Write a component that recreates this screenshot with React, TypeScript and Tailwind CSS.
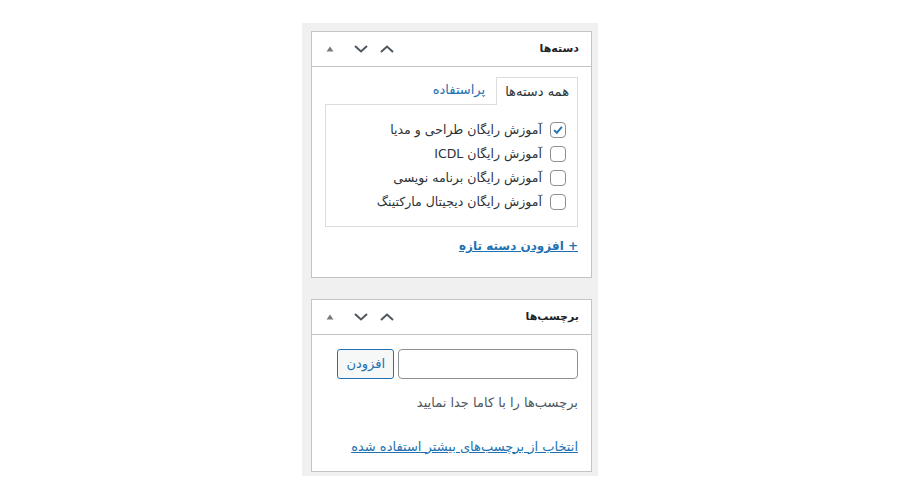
import React from 'react';

const categories = [
  { label: 'آموزش رایگان طراحی و مدیا', checked: true },
  { label: 'آموزش رایگان ICDL', checked: false },
  { label: 'آموزش رایگان برنامه نویسی', checked: false },
  { label: 'آموزش رایگان دیجیتال مارکتینگ', checked: false },
];

const font = { fontFamily: 'Tahoma, "DejaVu Sans", sans-serif' };

const HeaderControls: React.FC = () => (
  <div className="flex items-center" dir="ltr">
    {/* toggle */}
    <button className="w-[36px] h-[35px] flex items-center justify-center">
      <svg width="8" height="6" viewBox="0 0 8 6">
        <path d="M4 0.5 L7.5 5.5 L0.5 5.5 Z" fill="#787c82" />
      </svg>
    </button>
    {/* move down */}
    <button className="w-[26px] h-[35px] flex items-center justify-center">
      <svg width="14" height="8" viewBox="0 0 14 8">
        <path d="M1 1 L7 6.5 L13 1" fill="none" stroke="#50575e" strokeWidth="2" />
      </svg>
    </button>
    {/* move up */}
    <button className="w-[26px] h-[35px] flex items-center justify-center">
      <svg width="14" height="8" viewBox="0 0 14 8">
        <path d="M1 7 L7 1.5 L13 7" fill="none" stroke="#50575e" strokeWidth="2" />
      </svg>
    </button>
  </div>
);

const PostBox: React.FC<{ title: string; children: React.ReactNode }> = ({ title, children }) => (
  <div className="bg-white border border-[#c3c4c7]">
    <div className="flex items-center justify-between h-[35px] border-b border-[#c3c4c7] pr-[12px]">
      <h2 className="text-[11px] font-bold text-[#1d2327]">{title}</h2>
      <HeaderControls />
    </div>
    {children}
  </div>
);

const Checkbox: React.FC<{ checked: boolean }> = ({ checked }) => (
  <span className="w-[16px] h-[16px] border border-[#8c8f94] rounded-[4px] bg-white flex items-center justify-center shrink-0">
    {checked && (
      <svg width="16" height="16" viewBox="0 0 16 16">
        <path d="M3.6 8.2 L6.6 11.2 L12.4 4.3" fill="none" stroke="#2271b1" strokeWidth="2.2" />
      </svg>
    )}
  </span>
);

export default function App() {
  return (
    <div className="w-[900px] h-[500px] bg-white pt-[23px]" style={font}>
      <div dir="rtl" className="ml-[302px] w-[296px] h-[453px] bg-[#f0f0f1] pt-[8px] pr-[6px] pl-[9px]">
        <PostBox title="دسته‌ها">
          <div className="px-[13px] pt-[9px] pb-[20px]">
            <div className="flex items-end">
              <div className="h-[28px] px-[8px] flex items-center border border-b-0 border-[#dcdcde] bg-white text-[13px] text-[#2c3338] relative top-[1px]">
                همه دسته‌ها
              </div>
              <div className="h-[28px] px-[11px] flex items-center text-[13px] text-[#2271b1]">پراستفاده</div>
            </div>
            <div className="border border-[#dcdcde] pt-[13px] pb-[12px] pr-[11px]">
              {categories.map(c => (
                <label key={c.label} className="flex items-center gap-[8px] h-[24px] text-[12.5px] text-[#2c3338]">
                  <Checkbox checked={c.checked} />
                  <span>{c.label}</span>
                </label>
              ))}
            </div>
            <div className="mt-[6px]">
              <a className="text-[12px] font-bold text-[#2271b1] underline">+ افزودن دسته تازه</a>
            </div>
          </div>
        </PostBox>

        <div className="mt-[21px]">
          <PostBox title="برچسب‌ها">
            <div className="px-[13px] pt-[14px] pb-[13px]">
              <div className="flex items-center gap-[4px]">
                <input className="w-[180px] h-[30px] border border-[#8c8f94] rounded-[4px] bg-white" />
                <button className="h-[30px] px-[8px] border border-[#2271b1] rounded-[3px] bg-[#f6f7f7] text-[13px] text-[#2271b1]">
                  افزودن
                </button>
              </div>
              <p className="mt-[14px] text-[13px] text-[#50575e]">برچسب‌ها را با کاما جدا نمایید</p>
              <p className="mt-[21px]">
                <a className="text-[13px] text-[#2271b1] underline">انتخاب از برچسب‌های بیشتر استفاده شده</a>
              </p>
            </div>
          </PostBox>
        </div>
      </div>
    </div>
  );
}
